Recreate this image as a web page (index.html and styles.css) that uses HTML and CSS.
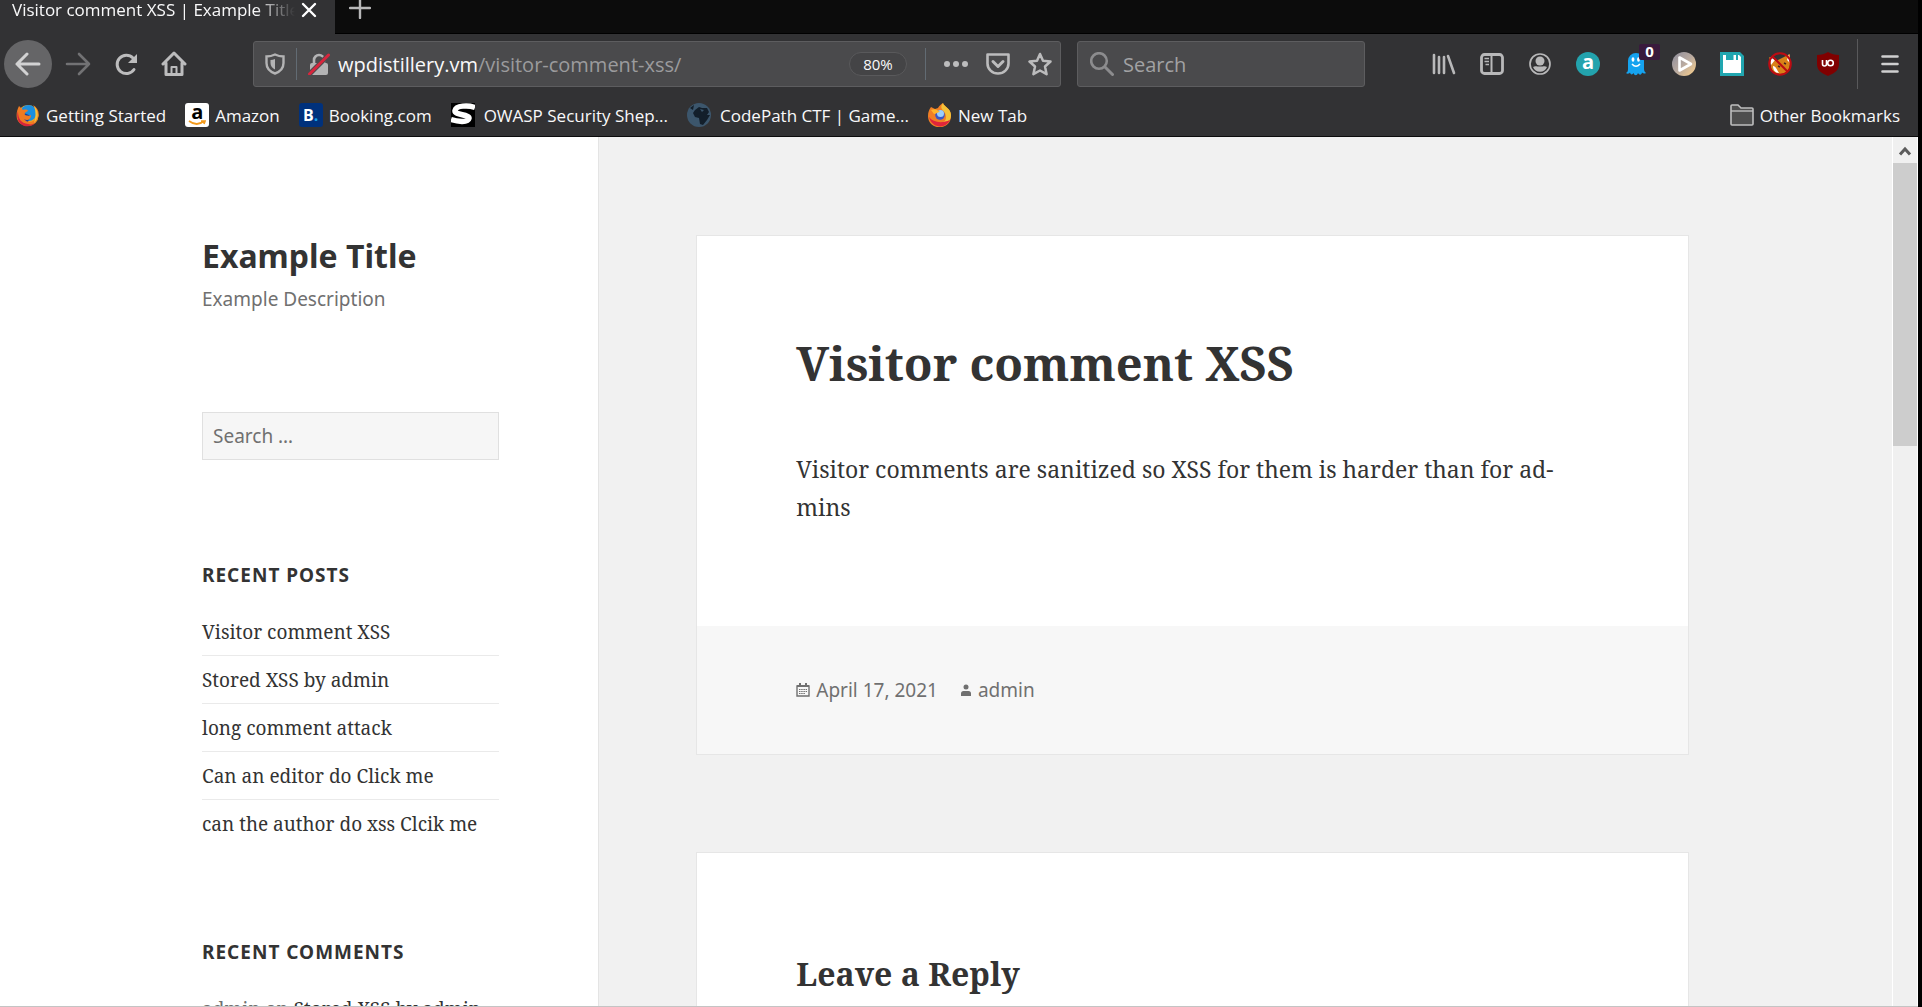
FILE: index.html
```html
<!DOCTYPE html>
<html lang="en">
<head>
<meta charset="utf-8">
<title>Visitor comment XSS | Example Title</title>
<link rel="stylesheet" href="styles.css">
</head>
<body>
<svg class="defs" width="0" height="0" aria-hidden="true">
  <defs>
    <linearGradient id="dusk" x1="0" y1="0" x2="1" y2="1"><stop offset="0" stop-color="#8d8d9c"/><stop offset=".5" stop-color="#b9aaa0"/><stop offset="1" stop-color="#ffd28a"/></linearGradient>
  </defs>
</svg>
<div class="browser">
  <div class="tabstrip">
    <div class="tab">
      <span class="tab-title">Visitor comment XSS | Example Title</span>
      <button class="plain" aria-label="Close tab"><svg width="16" height="16" viewBox="0 0 16 16"><path d="M2 2l12 12M14 2L2 14" stroke="#fff" stroke-width="2.4" stroke-linecap="round"/></svg></button>
    </div>
    <button class="plain new-tab" aria-label="New tab"><svg width="22" height="22" viewBox="0 0 22 22"><path d="M11 1v20M1 11h20" stroke="#b8b8b9" stroke-width="2.4" stroke-linecap="round"/></svg></button>
  </div>

  <div class="navbar">
    <button class="tool back" aria-label="Back"><svg width="26" height="24" viewBox="0 0 26 24" fill="none" stroke="#d2d2d3" stroke-width="3" stroke-linecap="round" stroke-linejoin="round"><path d="M24 12H2M12 2L2 12l10 10"/></svg></button>
    <button class="tool" aria-label="Forward"><svg width="26" height="24" viewBox="0 0 26 24" fill="none" stroke="#727274" stroke-width="2.6" stroke-linecap="round" stroke-linejoin="round"><path d="M2 12h22M14 2l10 10-10 10"/></svg></button>
    <button class="tool" aria-label="Reload"><svg width="24" height="24" viewBox="0 0 24 24" fill="none" stroke="#bcbcbd" stroke-width="3" stroke-linecap="round"><path d="M20 17.500A9.200 9.200 0 1 1 19 6"/><path d="M23 2v9h-9z" fill="#bcbcbd" stroke="none"/></svg></button>
    <button class="tool" aria-label="Home"><svg width="26" height="26" viewBox="0 0 26 26" fill="none" stroke="#bcbcbd" stroke-width="3" stroke-linecap="round" stroke-linejoin="round"><path d="M2 13L13 2l11 11M5 12v11.500h16V12"/><path d="M10.500 23v-7h5v7" stroke-width="2"/></svg></button>

    <div class="field urlbar">
      <svg width="20" height="22" viewBox="0 0 20 22" fill="none"><path d="M10 1.500C7 3 4 3.500 1.500 3.500V10c0 5 3 8.500 8.500 10.500 5.500-2 8.500-5.500 8.500-10.500V3.500C16 3.500 13 3 10 1.500z" stroke="#b3b3b4" stroke-width="2.400"/><path d="M10 6c-1.500.7-3 1-4.500 1v3c0 3 1.500 5 4.500 6.500z" fill="#b3b3b4"/></svg>
      <span class="rule"></span>
      <svg width="22" height="22" viewBox="0 0 22 22"><path d="M6 10V7a5 5 0 0 1 10 0v3" fill="none" stroke="#b3b3b4" stroke-width="2.600"/><rect x="2" y="10" width="18" height="12" rx="2" fill="#b3b3b4"/><path d="M1.500 21L20.500 2" stroke="#4a4a4c" stroke-width="5"/><path d="M1.500 21L20.500 2" stroke="#d7263d" stroke-width="3" stroke-linecap="round"/></svg>
      <span class="url"><span class="host">wpdistillery.vm</span>/visitor-comment-xss/</span>
      <button class="zoom">80%</button>
      <span class="rule"></span>
      <span class="url-actions">
        <button class="plain" aria-label="Page actions"><svg width="24" height="24" viewBox="0 0 24 24" fill="#bcbcbd"><circle cx="3" cy="12" r="3"/><circle cx="12" cy="12" r="3"/><circle cx="21" cy="12" r="3"/></svg></button>
        <button class="plain" aria-label="Save to Pocket"><svg width="24" height="24" viewBox="0 0 24 24" fill="none" stroke="#bcbcbd" stroke-linecap="round" stroke-linejoin="round"><path d="M1.500 2.500h21v9a10.500 10 0 0 1-21 0z" stroke-width="2.600"/><path d="M7 9.500l5 5 5-5" stroke-width="3"/></svg></button>
        <button class="plain" aria-label="Bookmark this page"><svg width="24" height="24" viewBox="0 0 24 24" fill="none" stroke="#bcbcbd" stroke-width="2.500" stroke-linejoin="round"><path d="M12 2l3 6.700 7.500.8-5.500 5 1.600 7.700L12 18.500l-6.600 3.700L7 14.500l-5.500-5 7.500-.8z"/></svg></button>
      </span>
    </div>

    <label class="field searchbar">
      <svg width="24" height="24" viewBox="0 0 24 24" fill="none" stroke="#8c8c8e" stroke-linecap="round"><circle cx="9" cy="9" r="7.800" stroke-width="2.600"/><path d="M15 15l7.500 7.500" stroke-width="3"/></svg>
      <input type="text" placeholder="Search" aria-label="Web search">
    </label>

    <div class="tools">
      <button class="tool" aria-label="Library"><svg width="24" height="22" viewBox="0 0 24 22" fill="none" stroke="#b8b8b9" stroke-width="2.600" stroke-linecap="round"><path d="M2 2v18M7 4v16M12 4v16M16 3l6 17"/></svg></button>
      <button class="tool" aria-label="Sidebars"><svg width="24" height="22" viewBox="0 0 24 22" fill="none" stroke="#b8b8b9"><rect x="1.500" y="1.500" width="21" height="19" rx="3" stroke-width="2.800"/><path d="M11.500 1v20" stroke-width="2"/><path d="M4.500 5.500h4.500M4.500 8.500h4.500M5.500 11.500h3.500" stroke-width="1.500"/></svg></button>
      <button class="tool" aria-label="Account"><svg width="22" height="22" viewBox="0 0 22 22"><circle cx="11" cy="11" r="10" fill="none" stroke="#b8b8b9" stroke-width="1.700"/><circle cx="11" cy="8" r="4.500" fill="#b8b8b9"/><path d="M4 14c2-1.500 3.500-.5 7-.5s5-1 7 .5a7.500 7.500 0 0 1-14 0z" fill="#b8b8b9"/></svg></button>
      <button class="tool" aria-label="Amazon Assistant"><span class="round-a">a</span></button>
      <button class="tool ghost" aria-label="Ghostery"><svg width="20" height="24" viewBox="0 0 20 24"><path d="M2 9a8 8 0 0 1 16 0v8c0 2 1 3 2 4-1.500 1-3 .5-4-.5-.5 2.500-2.500 3-4 .5-1 3-3.500 3-4.500 0-1 2-3 2-3.500-.5C3 22 1 22 0 21c1.500-1 2-2 2-4z" fill="#15a3ef"/><ellipse cx="7" cy="7.500" rx="1.400" ry="2.200" fill="#fff"/><ellipse cx="12.500" cy="7.500" rx="1.400" ry="2.200" fill="#fff"/><path d="M6 12q4 4.500 8 0" fill="none" stroke="#fff" stroke-width="1.500"/></svg><span class="count">0</span></button>
      <button class="tool" aria-label="Media player"><svg width="24" height="24" viewBox="0 0 24 24"><circle cx="12" cy="12" r="12" fill="url(#dusk)"/><path d="M7.500 5.500v13L19 12z" fill="none" stroke="#fff" stroke-width="2.600" stroke-linejoin="round"/></svg></button>
      <button class="tool" aria-label="Save page"><svg width="24" height="24" viewBox="0 0 24 24"><path d="M0 0h20l4 4v20H0z" fill="#21a6b0"/><path d="M3 3h3v5h12V3h1l2 2v16H3z" fill="#fff"/><path d="M13.500 3H16v5h-2.500z" fill="#fff"/></svg></button>
      <button class="tool" aria-label="Fox blocker"><svg width="24" height="24" viewBox="0 0 24 24"><path d="M1 5l7 4 6-3 8-4v9c0 6-3 11-10 11C6 22 3 18 3 14z" fill="#d98218"/><path d="M2 5l5 3-4 5zM21 2l-2 6 3 3zM5 14c3 0 4 4 6 7-4 0-6-3-6-7z" fill="#fff"/><path d="M10 14l2 1M16 11l2 1" stroke="#422" stroke-width="1.500"/><circle cx="12" cy="12" r="10.800" fill="none" stroke="#bd0b12" stroke-width="2"/><path d="M4.500 4.500l15 15" stroke="#bd0b12" stroke-width="2"/></svg></button>
      <button class="tool" aria-label="uBlock Origin"><svg width="22" height="24" viewBox="0 0 22 24"><path d="M11 0c3 2 7 3 11 3v9c0 6-4 9-11 12C4 21 0 18 0 12V3c4 0 8-1 11-3z" fill="#800000"/><path d="M5.500 8v4a2 2 0 0 0 4 0V8" fill="none" stroke="#fff" stroke-width="1.600"/><circle cx="13.500" cy="11" r="2.800" fill="none" stroke="#fff" stroke-width="1.600"/></svg></button>
    </div>
    <button class="tool menu" aria-label="Open menu"><svg width="18" height="18" viewBox="0 0 18 18" stroke="#cfcfd0" stroke-width="2.600" stroke-linecap="round"><path d="M1.500 1.500h15M1.500 9h15M1.500 16.500h15"/></svg></button>
  </div>

  <nav class="bookmarks" aria-label="Bookmarks">
    <a href="#"><svg width="24" height="24" viewBox="0 0 24 24"><circle cx="12" cy="12.500" r="10.500" fill="#f0a523"/><circle cx="12.500" cy="10" r="8" fill="#1b8fe0"/><path d="M6 9c2 2 5 1 8 4l-2 6H5z" fill="#1d3f9b"/><path d="M3 3l4 4c3-1 5 0 5 1-2 1-4 2-3 4 2 1 5 1 6 0 0 5-4 6-7 4 3 4 9 4 12-1 2-4 0-9-3-13 5 3 7 8 5 13-3 9-17 11-21 1-1-5 0-9 2-13z" fill="#ef7b22"/><path d="M2 8c0 8 3 12 10 13 3 1 6 0 8-2-4 6-15 6-18-2-1-3-1-6 0-9z" fill="#d8263a"/><path d="M18 3c5 5 5 12 0 17 2-6 2-12 0-17z" fill="#f6c13c"/></svg>Getting Started</a>
    <a href="#"><span class="tile amazon">a<svg width="20" height="6" viewBox="0 0 20 6"><path d="M2 1q8 6 15 0M14 1h4l-1 3" fill="none" stroke="#f39a1c" stroke-width="1.700"/></svg></span>Amazon</a>
    <a href="#"><span class="tile booking">B<span class="dot">.</span></span>Booking.com</a>
    <a class="wide" href="#"><svg width="24" height="24" viewBox="0 0 24 24"><path fill="#000" d="M0 0h24v24H0z"/><path d="M24 4.500C17 2 5 2.500 4 7.500c-1 5 15 3.500 14 8C17 20 6 18.500 0 16.500" fill="none" stroke="#fff" stroke-width="5.400"/></svg>OWASP Security Shep...</a>
    <a class="wide" href="#"><svg width="24" height="24" viewBox="0 0 24 24"><circle cx="12" cy="12" r="12" fill="#3c566c"/><path d="M8 7l4-3 3 1 5 0 2 4-2 3 3 0-3 5-4 5-3-1-1-6-4-1-2-4zM3 5l4-3-1 5z" fill="#131f2b"/><path d="M13 6l4 1-2 2z" fill="#3c566c"/></svg>CodePath CTF | Game...</a>
    <a href="#"><svg width="24" height="24" viewBox="0 0 24 24"><path d="M3 4l4 2 3-1c1-2 3-4 5-5 1 4 8 5 8 13 0 15-23 15-23 0 0-4 1-6 3-9z" fill="#f07f25"/><path d="M15 0c-4 5 0 7 2 10 2 4 1 8-2 9 6 1 8-3 8-7 0-7-7-8-8-12z" fill="#f5c238"/><path d="M1 14c4 5 12 7 21 3-4 9-18 9-21-3z" fill="#e0253b"/><circle cx="12" cy="12" r="4.800" fill="#3a56c4"/><circle cx="12.500" cy="10.500" r="3.500" fill="#9bd0fb"/><path d="M3 7c4-2 7 0 9 2-2 0-4 2-6 2z" fill="#ffb52b"/></svg>New Tab</a>
    <a class="other" href="#"><svg width="24" height="22" viewBox="0 0 24 22"><path d="M1 20V2q0-1 1-1h6l3 3h11q1 0 1 1v15q0 1-1 1H2q-1 0-1-1z" fill="#4e4e4e" stroke="#bfbfbf" stroke-width="1.600"/><path d="M1 7h22" stroke="#bfbfbf" stroke-width="1.400"/></svg>Other Bookmarks</a>
  </nav>

  <div class="viewport">
    <div class="page">
      <div class="site">
        <aside class="sidebar">
          <header class="branding">
            <p class="site-title"><a href="#">Example Title</a></p>
            <p class="site-description">Example Description</p>
          </header>
          <form class="search-form"><input type="search" placeholder="Search …" aria-label="Search for"></form>
          <section class="widget">
            <h2>Recent Posts</h2>
            <ul>
              <li><a href="#">Visitor comment XSS</a></li>
              <li><a href="#">Stored XSS by admin</a></li>
              <li><a href="#">long comment attack</a></li>
              <li><a href="#">Can an editor do Click me</a></li>
              <li><a href="#">can the author do xss Clcik me</a></li>
            </ul>
          </section>
          <section class="widget">
            <h2>Recent Comments</h2>
            <ul>
              <li>admin on <a href="#">Stored XSS by admin</a></li>
            </ul>
          </section>
        </aside>
        <main class="content">
          <article class="card">
            <div class="entry">
              <h1>Visitor comment XSS</h1>
              <p>Visitor comments are sanitized so XSS for them is harder than for ad&shy;mins</p>
            </div>
            <footer class="entry-footer">
              <a href="#"><svg width="14" height="14" viewBox="0 0 14 14" fill="none" stroke="#707070"><path d="M1 3h12v10H1z" stroke-width="1.400"/><path d="M1 3h12M4 0v3M10 0v3" stroke-width="2"/><path d="M3 6.500h8M3 8.500h8M3 10.500h6" stroke-width="1" stroke-dasharray="1.500 .7"/></svg>April 17, 2021</a>
              <a href="#"><svg width="12" height="14" viewBox="0 0 12 14" fill="#707070"><circle cx="6" cy="4" r="2.500"/><path d="M1 13v-2.500Q1 8 3.500 8h5Q11 8 11 10.500V13z"/></svg>admin</a>
            </footer>
          </article>
          <section class="card reply">
            <h2>Leave a Reply</h2>
          </section>
        </main>
      </div>
    </div>
    <div class="scrollbar" aria-hidden="true">
      <svg width="24" height="26" viewBox="0 0 24 26"><path d="M7 17.500l5-5.500 5 5.500" fill="none" stroke="#5c5c5c" stroke-width="3"/></svg>
      <div class="thumb"></div>
    </div>
  </div>
</div>
</body>
</html>
```
FILE: styles.css
```css
* { box-sizing: border-box; }

body {
  margin: 0;
  background: #000;
  color: #333;
  font-family: "Noto Serif", "Droid Serif", "DejaVu Serif Condensed", "DejaVu Serif", serif;
}

h1, h2, p, ul { margin: 0; padding: 0; }
a { color: inherit; text-decoration: none; }
button, input { font: inherit; color: inherit; }
svg { display: block; flex: none; }
.defs { position: absolute; }

.browser {
  display: flex;
  flex-direction: column;
  height: 100vh;
  padding-right: 4px;
  overflow: hidden;
  font-family: "Segoe UI", "Open Sans", sans-serif;
}

.plain {
  padding: 0;
  border: 0;
  background: none;
}

/* Tab strip */
.tabstrip {
  display: flex;
  height: 34px;
  flex: none;
  background: #0c0c0c;
  border-bottom: 1px solid #000;
}

.tab {
  display: flex;
  align-items: flex-start;
  gap: 6px;
  width: 335px;
  height: 34px;
  padding: 0 18px 0 12px;
  background: #323234;
  color: #f9f9fa;
  font-size: 17px;
}

.tab .plain { padding-top: 2px; }

.tab-title {
  flex: 1;
  overflow: hidden;
  white-space: nowrap;
  line-height: 20px;
  -webkit-mask-image: linear-gradient(to left, transparent, #000 40px);
  mask-image: linear-gradient(to left, transparent, #000 40px);
}

.new-tab {
  align-self: flex-start;
  margin-left: 14px;
}

.new-tab svg { margin-top: -3px; }

/* Navigation toolbar */
.navbar {
  display: flex;
  align-items: center;
  flex: none;
  height: 60px;
  padding: 0 4px;
  background: #323234;
}

.tool {
  display: flex;
  align-items: center;
  justify-content: center;
  flex: none;
  width: 48px;
  height: 48px;
  padding: 0;
  border: 0;
  background: none;
}

.back {
  margin-right: 2px;
  border-radius: 50%;
  background: #656567;
}

.field {
  display: flex;
  align-items: center;
  height: 46px;
  border: 1px solid #5d5d5f;
  border-radius: 3px;
  background: #4a4a4c;
  font-size: 20px;
}

.urlbar {
  flex: 1;
  margin: 0 16px 0 55px;
  padding: 0 8px 0 11px;
}

.rule {
  width: 1px;
  height: 32px;
  margin: 0 11px;
  background: #626b73;
}

.url {
  flex: 1;
  margin-left: 8px;
  color: #9b9b9d;
  white-space: nowrap;
}

.host { color: #f9f9fa; }

.zoom {
  width: 58px;
  height: 24px;
  margin-right: 7px;
  padding: 0;
  border: 1px solid #59595b;
  border-radius: 12px;
  background: #444446;
  color: #f9f9fa;
  font-size: 15px;
  line-height: 20px;
}

.url-actions {
  display: flex;
  gap: 18px;
  margin-left: 7px;
}

.searchbar {
  width: 288px;
  gap: 9px;
  padding: 0 12px;
}

.searchbar input {
  width: 100%;
  min-width: 0;
  padding: 0;
  border: 0;
  background: none;
}

.searchbar input::placeholder { color: #a2a2a4; opacity: 1; }

.tools {
  display: flex;
  margin-left: 55px;
}

.round-a {
  width: 24px;
  height: 24px;
  border-radius: 50%;
  background: #23a3ad;
  color: #fff;
  font-size: 20px;
  font-weight: 700;
  line-height: 20px;
  text-align: center;
}

.ghost { position: relative; }

.count {
  position: absolute;
  top: 4px;
  right: 0;
  width: 21px;
  height: 16px;
  border-radius: 2px;
  background: #391a3d;
  color: #fff;
  font-size: 15px;
  font-weight: 700;
  line-height: 15px;
}

.menu {
  width: 57px;
  height: 50px;
  padding-left: 7px;
  margin-left: 5px;
  border-left: 1px solid #59595b;
}

/* Bookmarks toolbar */
.bookmarks {
  display: flex;
  align-items: center;
  gap: 19px;
  flex: none;
  height: 43px;
  padding: 0 18px 0 16px;
  background: #323234;
  border-bottom: 1px solid #0c0c0d;
  color: #f9f9fa;
  font-size: 17px;
  white-space: nowrap;
}

.bookmarks a {
  display: flex;
  align-items: center;
  gap: 6px;
}

.bookmarks .wide { gap: 9px; }
.bookmarks .other { margin-left: auto; }

.tile {
  display: flex;
  justify-content: center;
  width: 24px;
  height: 24px;
  border-radius: 3px;
  font-size: 16px;
  font-weight: 700;
  line-height: 24px;
}

.amazon {
  flex-direction: column;
  align-items: center;
  background: #fff;
  color: #000;
  font-size: 20px;
  line-height: 16px;
}

.booking { background: #00317c; color: #fff; }
.dot { color: #18a0e6; }

/* Page viewport */
.viewport {
  display: flex;
  flex: 1;
  min-height: 0;
  border-bottom: 1px solid #c4c4c4;
}

.page {
  flex: 1;
  overflow: hidden;
  background: linear-gradient(to right, #fff 50%, #f1f1f1 50%);
  font-family: "Noto Serif", "Droid Serif", "DejaVu Serif Condensed", "DejaVu Serif", serif;
}

.site {
  display: grid;
  grid-template-columns: 5fr 12fr;
  max-width: 1684px;
  margin: 0 auto;
}

.sidebar {
  padding: 97px 99px 0 98px;
  background: #fff;
  border-right: 1px solid #e4e4e4;
  font-size: 19px;
}

.branding,
.search-form input { font-family: "Noto Sans", sans-serif; }

.site-title {
  font-size: 32px;
  font-weight: 700;
  line-height: 44px;
}

.site-description {
  padding-top: 7px;
  color: #707070;
  font-size: 19px;
  line-height: 28px;
}

.search-form { margin: 99px 0 101px; }

.search-form input {
  display: block;
  width: 100%;
  height: 48px;
  padding: 0 10px;
  border: 1px solid #e0e0e0;
  border-radius: 0;
  background: #f6f6f6;
  font-size: 19px;
}

.search-form input::placeholder { color: #707070; opacity: 1; }

.widget { margin-bottom: 99px; }

.widget h2 {
  margin-bottom: 19px;
  font-family: "Noto Sans", sans-serif;
  font-size: 19px;
  letter-spacing: 1px;
  line-height: 28px;
  text-transform: uppercase;
}

.widget ul { list-style: none; color: #707070; }
.widget li { padding: 10px 0 8px; line-height: 29px; border-top: 1px solid #eaeaea; }
.widget li:first-child { border-top: 0; }
.widget li:last-child { padding-bottom: 0; }
.widget a { color: #333; }

.content {
  display: flex;
  flex-direction: column;
  gap: 97px;
  padding: 98px 99px 0 97px;
  background: #f1f1f1;
}

.card {
  border: 1px solid #e6e6e6;
  background: #fff;
}

.entry { padding: 99px 99px 100px; }

.entry h1 {
  margin-bottom: 59px;
  font-size: 47px;
  line-height: 56px;
}

.entry p {
  font-size: 23px;
  line-height: 38px;
}

.entry-footer {
  display: flex;
  gap: 22px;
  padding: 50px 99px;
  background: #f7f7f7;
  color: #707070;
  font-family: "Noto Sans", sans-serif;
  font-size: 19px;
  line-height: 28px;
}

.entry-footer a {
  display: flex;
  align-items: center;
  gap: 6px;
}

.reply { padding: 99px; }

.reply h2 {
  font-size: 32px;
  line-height: 44px;
}

/* Scrollbar */
.scrollbar {
  width: 26px;
  background: #f0f0f0;
  border-left: 1px solid #fff;
  border-right: 1px solid #fff;
}

.thumb {
  height: 283px;
  background: #cdcdcd;
}
```
